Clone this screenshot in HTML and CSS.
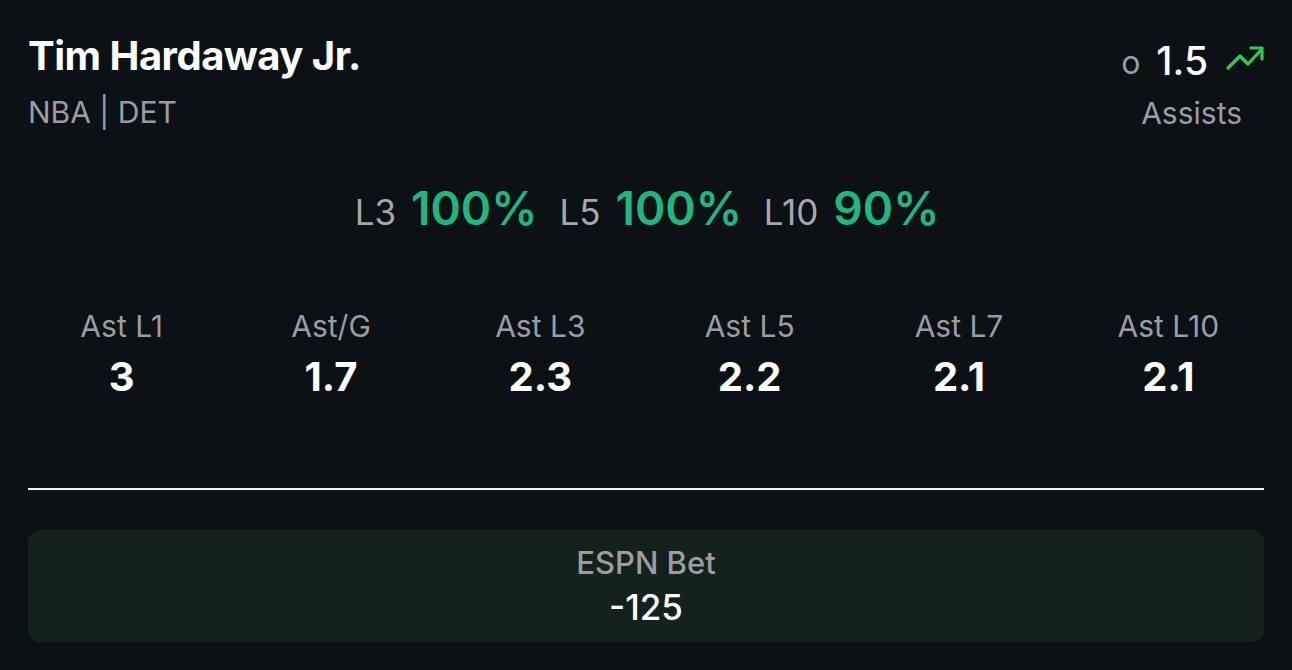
FILE: index.html
```html
<!DOCTYPE html>
<html>
<head>
<meta charset="utf-8">
<link rel="stylesheet" href="styles.css">
</head>
<body>
<div class="card">
  <div class="header">
    <div class="player">
      <div class="name">Tim Hardaway Jr.</div>
      <div class="team">NBA | DET</div>
    </div>
    <div class="line">
      <div class="line-top">
        <span class="ou">o</span>
        <span class="num">1.5</span>
        <svg class="trend" width="38" height="26" viewBox="0 0 38 26" fill="none" stroke="#2fcb57" stroke-width="3.2" stroke-linecap="round" stroke-linejoin="round">
          <path d="M2 23 L14 11 L22 19 L35 5"/>
          <path d="M25 3 H36 V14"/>
        </svg>
      </div>
      <div class="market">Assists</div>
    </div>
  </div>

  <div class="hits">
    <span class="hl">L3</span><span class="hv">100%</span>
    <span class="hl">L5</span><span class="hv">100%</span>
    <span class="hl">L10</span><span class="hv">90%</span>
  </div>

  <div class="stats">
    <div class="stat"><div class="sl">Ast L1</div><div class="sv">3</div></div>
    <div class="stat"><div class="sl">Ast/G</div><div class="sv">1.7</div></div>
    <div class="stat"><div class="sl">Ast L3</div><div class="sv">2.3</div></div>
    <div class="stat"><div class="sl">Ast L5</div><div class="sv">2.2</div></div>
    <div class="stat"><div class="sl">Ast L7</div><div class="sv">2.1</div></div>
    <div class="stat"><div class="sl">Ast L10</div><div class="sv">2.1</div></div>
  </div>

  <div class="divider"></div>

  <div class="book">
    <div class="book-name">ESPN Bet</div>
    <div class="book-odds">-125</div>
  </div>
</div>
</body>
</html>
```

FILE: styles.css
```css
html, body {
  margin: 0;
  padding: 0;
  background: #0b1114;
}
body {
  font-family: Inter, "Noto Sans", sans-serif;
  color: #ffffff;
  width: 1292px;
  height: 670px;
  overflow: hidden;
}
.card {
  padding: 28px 28px 0 28px;
  display: flex;
  flex-direction: column;
}
.header {
  display: flex;
  justify-content: space-between;
  align-items: flex-start;
}
.name {
  font-size: 40px;
  font-weight: 700;
  line-height: 56px;
  letter-spacing: -0.5px;
}
.team {
  font-size: 30px;
  color: #9c9da3;
  line-height: 40px;
  margin-top: 8px;
}
.line {
  display: flex;
  flex-direction: column;
  align-items: flex-end;
}
.line-top {
  display: flex;
  align-items: center;
  height: 64px;
}
.ou {
  font-size: 32px;
  color: #9c9da3;
  margin-right: 16px;
  margin-top: 4px;
}
.num {
  font-size: 39px;
  font-weight: 500;
  margin-right: 18px;
}
.trend {
  margin-top: -4px;
}
.market {
  font-size: 30px;
  color: #9c9da3;
  line-height: 34px;
  margin-right: 22px;
  margin-top: 4px;
}
.hits {
  display: flex;
  justify-content: center;
  align-items: baseline;
  margin-top: 48px;
  padding-left: 2px;
}
.hl {
  font-size: 35px;
  color: #a6a7ad;
  margin-right: 15px;
}
.hv {
  font-size: 46px;
  font-weight: 600;
  color: #1fb682;
  margin-right: 22px;
}
.hv:last-child {
  margin-right: 0;
}
.stats {
  display: grid;
  grid-template-columns: repeat(6, 1fr);
  margin: 72px -9px 0 -11px;
}
.stat {
  display: flex;
  flex-direction: column;
  align-items: center;
}
.sl {
  font-size: 30px;
  color: #9c9da3;
  line-height: 36px;
}
.sv {
  font-size: 40px;
  font-weight: 700;
  line-height: 46px;
  margin-top: 10px;
}
.divider {
  height: 2px;
  background: #f2f2f2;
  margin-top: 88px;
}
.book {
  margin-top: 40px;
  height: 112px;
  background: #14221e;
  border-radius: 12px;
  display: flex;
  flex-direction: column;
  align-items: center;
  justify-content: center;
}
.book-name {
  font-size: 31px;
  color: #9c9da3;
  line-height: 38px;
  font-weight: 500;
}
.book-odds {
  font-size: 35px;
  font-weight: 500;
  line-height: 42px;
  margin-top: 4px;
}
```
